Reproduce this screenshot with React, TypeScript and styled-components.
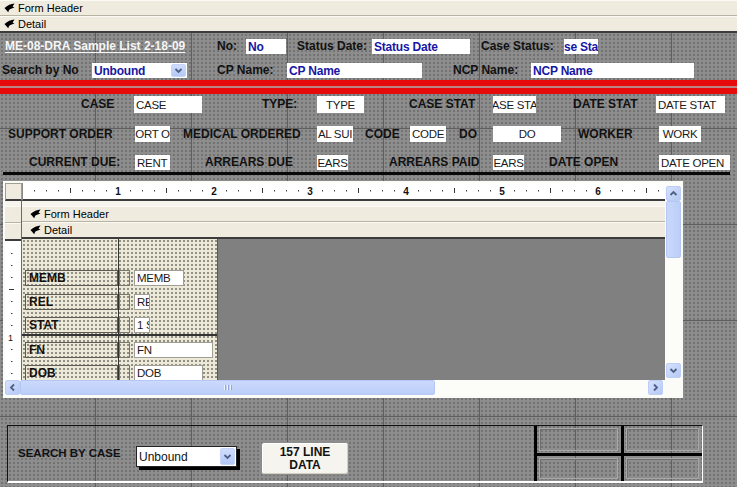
import styled, { createGlobalStyle } from "styled-components";

const GlobalStyle = createGlobalStyle`
  html, body {
    margin: 0;
    padding: 0;
    background: #8d8d8d;
  }
  body {
    font-family: "Liberation Sans", Arial, sans-serif;
  }
`;

const Screen = styled.div`
  width: 737px;
  height: 487px;
  overflow: hidden;
  display: flex;
  flex-direction: column;
`;

const SectionBar = styled.div<{ $last?: boolean; $indent?: number }>`
  flex: none;
  box-sizing: border-box;
  height: ${(p) => (p.$last ? 17 : 16)}px;
  display: flex;
  align-items: center;
  gap: 3px;
  padding-left: ${(p) => p.$indent ?? 4}px;
  background: #efecdf;
  border-top: 1px solid #fbfaf4;
  border-bottom: ${(p) => (p.$last ? "2px solid #3c3c3c" : "1px solid #b7b4a4")};
  font-size: 11px;
  color: #000;
`;

const Canvas = styled.div`
  position: relative;
  flex: 1;
  background-color: #8d8d8d;
  background-image: repeating-linear-gradient(
      to right,
      transparent 0 95px,
      #5f5f5f 95px 96px
    ),
    repeating-linear-gradient(to bottom, transparent 0 95px, #5f5f5f 95px 96px),
    radial-gradient(circle, #727272 0.7px, transparent 0.9px);
  background-size: auto, auto, 4px 4px;
`;

const Label = styled.span<{
  $x: number;
  $y: number;
  $h?: number;
  $white?: boolean;
}>`
  position: absolute;
  left: ${(p) => p.$x}px;
  top: ${(p) => p.$y}px;
  height: ${(p) => p.$h ?? 16}px;
  line-height: ${(p) => p.$h ?? 16}px;
  font-size: 12px;
  font-weight: 700;
  white-space: nowrap;
  color: ${(p) => (p.$white ? "#f6f6f6" : "#111")};
  text-decoration: ${(p) => (p.$white ? "underline" : "none")};
  text-underline-offset: 2px;
`;

const Field = styled.div<{
  $x: number;
  $y: number;
  $w: number;
  $h?: number;
  $blue?: boolean;
  $center?: boolean;
}>`
  position: absolute;
  left: ${(p) => p.$x}px;
  top: ${(p) => p.$y}px;
  width: ${(p) => p.$w}px;
  height: ${(p) => p.$h ?? 16}px;
  box-sizing: border-box;
  padding: 0 ${(p) => (p.$center ? 0 : 2)}px;
  display: flex;
  align-items: center;
  justify-content: ${(p) => (p.$center ? "center" : "flex-start")};
  overflow: hidden;
  white-space: nowrap;
  background: #fff;
  font-size: ${(p) => (p.$blue ? 12 : 11.5)}px;
  letter-spacing: ${(p) => (p.$blue ? -0.2 : -0.3)}px;
  font-weight: ${(p) => (p.$blue ? 700 : 400)};
  color: ${(p) => (p.$blue ? "#1717a4" : "#1a1a1a")};
`;

const Combo = styled(Field)`
  padding-right: 1px;
  justify-content: space-between;
`;

const DropButton = styled.span`
  width: 15px;
  height: calc(100% - 2px);
  box-sizing: border-box;
  display: flex;
  align-items: center;
  justify-content: center;
  border: 1px solid #c4d4fb;
  border-radius: 2px;
  background: linear-gradient(#cfdcfc, #b4c8f6);
`;

const RedBand = styled.div`
  position: absolute;
  left: 0;
  right: 0;
  top: 47px;
  height: 14px;
  background: linear-gradient(
    to bottom,
    #e60a0a 0 6px,
    #b98585 6px 8px,
    #e60a0a 8px
  );
`;

const BlackRule = styled.div`
  position: absolute;
  left: 3px;
  top: 139px;
  width: 727px;
  height: 3px;
  background: #080808;
`;

/* subform window */

const SubWindow = styled.div`
  position: absolute;
  left: 3px;
  top: 148px;
  width: 680px;
  height: 217px;
  box-sizing: border-box;
  padding: 2px;
  background: #fbfbf7;
  display: grid;
  grid-template-columns: 17px 643px 16px;
  grid-template-rows: 18px 179px 16px;
`;

const RulerCorner = styled.div`
  grid-area: 1 / 1;
  box-sizing: border-box;
  background: #efecdf;
  border: 1px solid #a19e90;
  border-bottom: 2px solid #3c3c3c;
`;

const HRuler = styled.div`
  grid-area: 1 / 2;
  box-sizing: border-box;
  background: #fff;
  border-left: 1px solid #8a8a8a;
  border-bottom: 2px solid #3c3c3c;
`;

const LeftColumn = styled.div`
  grid-area: 2 / 1;
  display: flex;
  flex-direction: column;
  padding-top: 5px;
  background: #f6f5ee;
  border-right: 1px solid #6a6a6a;
`;

const LeftCell = styled.div<{ $last?: boolean }>`
  flex: none;
  box-sizing: border-box;
  height: ${(p) => (p.$last ? 18 : 17)}px;
  background: #efecdf;
  border-top: 1px solid #fbfaf4;
  border-bottom: ${(p) => (p.$last ? "2px solid #3c3c3c" : "1px solid #b7b4a4")};
`;

const VRuler = styled.div`
  flex: 1;
  background: #fff;
`;

const SubBody = styled.div`
  grid-area: 2 / 2;
  display: flex;
  flex-direction: column;
  padding-top: 5px;
  background: #f6f5ee;
  overflow: hidden;
`;

const DetailArea = styled.div`
  flex: 1;
  display: flex;
`;

const DotPanel = styled.div`
  position: relative;
  width: 195px;
  flex: none;
  background-color: #ece9d8;
  background-image: radial-gradient(circle, #8f8c80 0.7px, transparent 0.9px);
  background-size: 4px 4px;
  border-right: 1px solid #5a5a5a;
  overflow: hidden;
`;

const GrayFill = styled.div`
  flex: 1;
  background: #808080;
`;

const PanelLine = styled.div<{ $vertical?: boolean }>`
  position: absolute;
  background: #333;
  ${(p) =>
    p.$vertical
      ? "left: 96px; top: 0; bottom: 0; width: 1px;"
      : "top: 95px; left: 0; right: 0; height: 2px;"}
`;

const SubLabel = styled.div<{ $y: number }>`
  position: absolute;
  left: 3px;
  top: ${(p) => p.$y}px;
  width: 93px;
  height: 16px;
  box-sizing: border-box;
  padding-left: 3px;
  border: 1px solid #5c5a52;
  font-size: 12px;
  font-weight: 700;
  line-height: 14px;
  color: #111;
`;

const SubStub = styled.div<{ $y: number }>`
  position: absolute;
  left: 97px;
  top: ${(p) => p.$y}px;
  width: 11px;
  height: 16px;
  box-sizing: border-box;
  border: 1px solid #7a786e;
`;

const SubField = styled.div<{ $y: number; $w: number }>`
  position: absolute;
  left: 112px;
  top: ${(p) => p.$y}px;
  width: ${(p) => p.$w}px;
  height: 16px;
  box-sizing: border-box;
  padding-left: 2px;
  background: #fff;
  border: 1px solid #a09e94;
  font-size: 11.5px;
  letter-spacing: -0.3px;
  line-height: 14px;
  color: #1a1a1a;
  white-space: nowrap;
  overflow: hidden;
`;

const VScroll = styled.div`
  grid-area: 1 / 3 / 3 / 4;
  display: flex;
  flex-direction: column;
  padding: 3px 0 2px 1px;
  background: #fcfcf8;
`;

const HScroll = styled.div`
  grid-area: 3 / 1 / 4 / 3;
  display: flex;
  padding-right: 2px;
  background: #fcfcf8;
`;

const ScrollButton = styled.div`
  flex: none;
  width: 15px;
  height: 15px;
  box-sizing: border-box;
  display: flex;
  align-items: center;
  justify-content: center;
  border: 1px solid #bccdf7;
  border-radius: 2px;
  background: linear-gradient(135deg, #d6e1fd, #b6c9f5);
`;

const Thumb = styled.div<{ $vertical?: boolean }>`
  flex: none;
  box-sizing: border-box;
  ${(p) => (p.$vertical ? "height: 57px; width: 15px;" : "width: 415px; height: 15px;")}
  display: flex;
  align-items: center;
  justify-content: center;
  border: 1px solid #b5c8f5;
  border-radius: 2px;
  background: ${(p) =>
    p.$vertical
      ? "linear-gradient(to right, #c9d8fc, #bccef8)"
      : "linear-gradient(#cad9fc, #bccef8)"};
`;

const Grip = styled.span`
  width: 8px;
  height: 5px;
  background: repeating-linear-gradient(
    to right,
    #eef3ff 0 1px,
    #8ea6de 1px 2px,
    transparent 2px 3px
  );
`;

const Track = styled.div`
  flex: 1;
`;

/* bottom frame */

const Frame = styled.div`
  position: absolute;
  left: 7px;
  top: 392px;
  width: 696px;
  height: 58px;
  box-sizing: border-box;
  display: flex;
  border-top: 1px solid #111;
  border-left: 1px solid #111;
  border-right: 1px solid #fff;
  border-bottom: 2px solid #fff;
`;

const SearchLabel = styled.span`
  align-self: center;
  width: 128px;
  flex: none;
  box-sizing: border-box;
  padding-left: 10px;
  margin-top: -1px;
  font-size: 11.5px;
  font-weight: 700;
  color: #111;
  white-space: nowrap;
`;

const FrameCombo = styled.div`
  width: 101px;
  height: 21px;
  margin-top: 20px;
  box-sizing: border-box;
  display: flex;
  align-items: center;
  justify-content: space-between;
  padding: 0 1px 0 2px;
  background: #fff;
  border: 1px solid #222;
  box-shadow: 3px 3px 0 #000;
  font-size: 12px;
  color: #111;
`;

const LineButton = styled.div`
  width: 88px;
  height: 33px;
  margin: 16px 0 0 24px;
  box-sizing: border-box;
  display: flex;
  flex-direction: column;
  align-items: center;
  justify-content: center;
  background: #f5f4ee;
  border: 1px solid #8a8c8c;
  border-radius: 3px;
  box-shadow: inset -1px -1px 0 #d3d0c3, inset 1px 1px 0 #fff;
  font-size: 12px;
  font-weight: 700;
  line-height: 13px;
  color: #111;
`;

const CellGrid = styled.div`
  margin-left: auto;
  display: grid;
  grid-template-columns: 87px 78px;
  grid-template-rows: 30px 25px;
  border-left: 3px solid #000;
`;

const Cell = styled.div<{ $right?: boolean; $bottom?: boolean }>`
  box-sizing: border-box;
  padding: 2px 3px 2px 2px;
  border-right: ${(p) => (p.$right ? "3px solid #000" : "none")};
  border-bottom: ${(p) => (p.$bottom ? "3px solid #000" : "none")};
  display: flex;
`;

const CellBox = styled.div`
  flex: 1;
  border: 1px solid #a8a8a8;
  box-shadow: inset 1px 1px 0 #6e6e6e;
`;

/* drawings */

function SectionIcon() {
  return (
    <svg width="11" height="10" viewBox="0 0 11 10">
      <path
        d="M10.5 0.5 C7 0.8 3.5 2.2 0.5 5 L4.2 9.3 L5.2 6.8 C6.8 5.6 8.6 5.1 10.5 5.1 L8.6 3.4 Z"
        fill="#000"
      />
    </svg>
  );
}

function Chevron({ dir = "down" }: { dir?: "down" | "up" | "left" | "right" }) {
  const rot = { down: 0, up: 180, left: 90, right: -90 }[dir];
  return (
    <svg width="9" height="9" viewBox="0 0 9 9" style={{ transform: `rotate(${rot}deg)` }}>
      <path d="M1.5 3 L4.5 6 L7.5 3" fill="none" stroke="#4d6185" strokeWidth="1.8" />
    </svg>
  );
}

function RulerMarks() {
  const ticks = Array.from({ length: 54 }, (_, i) => i + 1);
  return (
    <svg width="642" height="16">
      {ticks.map((i) => {
        const x = i * 12 - 1;
        if (i % 8 === 0) {
          return (
            <text
              key={i}
              x={x}
              y={11.5}
              fontSize="10"
              fontWeight="700"
              textAnchor="middle"
              fontFamily="Liberation Sans, Arial, sans-serif"
              fill="#111"
            >
              {i / 8}
            </text>
          );
        }
        if (i % 4 === 0) {
          return <rect key={i} x={x} y={5} width={1} height={5} fill="#333" />;
        }
        return <rect key={i} x={x} y={7} width={1} height={1.5} fill="#444" />;
      })}
    </svg>
  );
}

function SideRulerMarks() {
  const ticks = Array.from({ length: 11 }, (_, i) => i + 1);
  return (
    <svg width="16" height="139">
      {ticks.map((i) => {
        const y = i * 12;
        if (i === 8) {
          return (
            <text
              key={i}
              x={3}
              y={y + 4}
              fontSize="9"
              fontFamily="Liberation Sans, Arial, sans-serif"
              fill="#111"
            >
              1
            </text>
          );
        }
        if (i % 4 === 0) {
          return <rect key={i} x={4} y={y} width={5} height={1} fill="#333" />;
        }
        return <rect key={i} x={6} y={y} width={1.5} height={1} fill="#444" />;
      })}
    </svg>
  );
}

/* data */

interface LabelDef {
  x: number;
  y: number;
  t: string;
  h?: number;
  white?: boolean;
}

interface FieldDef {
  x: number;
  y: number;
  w: number;
  t: string;
  h?: number;
  blue?: boolean;
  center?: boolean;
}

const labels: LabelDef[] = [
  { x: 5, y: 5, t: "ME-08-DRA Sample List 2-18-09", white: true },
  { x: 217, y: 5, t: "No:" },
  { x: 297, y: 5, t: "Status Date:" },
  { x: 481, y: 5, t: "Case Status:" },
  { x: 2, y: 29, t: "Search by No" },
  { x: 217, y: 29, t: "CP Name:" },
  { x: 453, y: 29, t: "NCP Name:" },
  { x: 81, y: 63, h: 17, t: "CASE" },
  { x: 262, y: 63, h: 17, t: "TYPE:" },
  { x: 409, y: 63, h: 17, t: "CASE STAT" },
  { x: 573, y: 63, h: 17, t: "DATE STAT" },
  { x: 8, y: 93, t: "SUPPORT ORDER" },
  { x: 183, y: 93, t: "MEDICAL ORDERED" },
  { x: 365, y: 93, t: "CODE" },
  { x: 459, y: 93, t: "DO" },
  { x: 578, y: 93, t: "WORKER" },
  { x: 29, y: 122, h: 15, t: "CURRENT DUE:" },
  { x: 205, y: 122, h: 15, t: "ARREARS DUE" },
  { x: 389, y: 122, h: 15, t: "ARREARS PAID" },
  { x: 549, y: 122, h: 15, t: "DATE OPEN" },
];

const fields: FieldDef[] = [
  { x: 246, y: 6, w: 40, h: 15, t: "No", blue: true },
  { x: 372, y: 6, w: 98, h: 15, t: "Status Date", blue: true },
  { x: 564, y: 6, w: 34, h: 15, t: "se Sta", blue: true, center: true },
  { x: 287, y: 30, w: 135, h: 15, t: "CP Name", blue: true },
  { x: 531, y: 30, w: 163, h: 15, t: "NCP Name", blue: true },
  { x: 134, y: 63, w: 68, h: 17, t: "CASE" },
  { x: 317, y: 63, w: 47, h: 17, t: "TYPE", center: true },
  { x: 493, y: 63, w: 43, h: 17, t: "ASE STA", center: true },
  { x: 656, y: 63, w: 69, h: 17, t: "DATE STAT" },
  { x: 135, y: 93, w: 35, t: "ORT O", center: true },
  { x: 317, y: 93, w: 36, t: "AL SUI", center: true },
  { x: 410, y: 93, w: 36, t: "CODE", center: true },
  { x: 493, y: 93, w: 68, t: "DO", center: true },
  { x: 659, y: 93, w: 42, t: "WORK", center: true },
  { x: 135, y: 122, w: 35, h: 15, t: "RENT" },
  { x: 317, y: 122, w: 31, h: 15, t: "EARS", center: true },
  { x: 493, y: 122, w: 31, h: 15, t: "EARS", center: true },
  { x: 659, y: 122, w: 71, h: 15, t: "DATE OPEN" },
];

const subRows = [
  { y: 31, label: "MEMB", w: 50, t: "MEMB" },
  { y: 55, label: "REL", w: 16, t: "RE" },
  { y: 78, label: "STAT", w: 16, t: "1 S" },
  { y: 103, label: "FN", w: 79, t: "FN" },
  { y: 126, label: "DOB", w: 69, t: "DOB" },
];

export default function App() {
  return (
    <>
      <GlobalStyle />
      <Screen>
        <SectionBar>
          <SectionIcon />
          Form Header
        </SectionBar>
        <SectionBar $last>
          <SectionIcon />
          Detail
        </SectionBar>
        <Canvas>
          {labels.map((l) => (
            <Label key={l.t + l.x} $x={l.x} $y={l.y} $h={l.h} $white={l.white}>
              {l.t}
            </Label>
          ))}
          {fields.map((f) => (
            <Field
              key={f.t + f.x}
              $x={f.x}
              $y={f.y}
              $w={f.w}
              $h={f.h}
              $blue={f.blue}
              $center={f.center}
            >
              {f.t}
            </Field>
          ))}
          <Combo $x={92} $y={30} $w={95} $h={15} $blue>
            Unbound
            <DropButton>
              <Chevron />
            </DropButton>
          </Combo>
          <RedBand />
          <BlackRule />

          <SubWindow>
            <RulerCorner />
            <HRuler>
              <RulerMarks />
            </HRuler>
            <VScroll>
              <ScrollButton>
                <Chevron dir="up" />
              </ScrollButton>
              <Thumb $vertical />
              <Track />
              <ScrollButton>
                <Chevron />
              </ScrollButton>
            </VScroll>
            <LeftColumn>
              <LeftCell />
              <LeftCell $last />
              <VRuler>
                <SideRulerMarks />
              </VRuler>
            </LeftColumn>
            <SubBody>
              <SectionBar $indent={8}>
                <SectionIcon />
                Form Header
              </SectionBar>
              <SectionBar $last $indent={8}>
                <SectionIcon />
                Detail
              </SectionBar>
              <DetailArea>
                <DotPanel>
                  <PanelLine $vertical />
                  <PanelLine />
                  {subRows.map((r) => (
                    <div key={r.label}>
                      <SubLabel $y={r.y}>{r.label}</SubLabel>
                      <SubStub $y={r.y} />
                      <SubField $y={r.y} $w={r.w}>
                        {r.t}
                      </SubField>
                    </div>
                  ))}
                </DotPanel>
                <GrayFill />
              </DetailArea>
            </SubBody>
            <HScroll>
              <ScrollButton>
                <Chevron dir="left" />
              </ScrollButton>
              <Thumb>
                <Grip />
              </Thumb>
              <Track />
              <ScrollButton>
                <Chevron dir="right" />
              </ScrollButton>
            </HScroll>
          </SubWindow>

          <Frame>
            <SearchLabel>SEARCH BY CASE</SearchLabel>
            <FrameCombo>
              Unbound
              <DropButton>
                <Chevron />
              </DropButton>
            </FrameCombo>
            <LineButton>
              <span>157 LINE</span>
              <span>DATA</span>
            </LineButton>
            <CellGrid>
              <Cell $right $bottom>
                <CellBox />
              </Cell>
              <Cell $bottom>
                <CellBox />
              </Cell>
              <Cell $right>
                <CellBox />
              </Cell>
              <Cell>
                <CellBox />
              </Cell>
            </CellGrid>
          </Frame>
        </Canvas>
      </Screen>
    </>
  );
}
